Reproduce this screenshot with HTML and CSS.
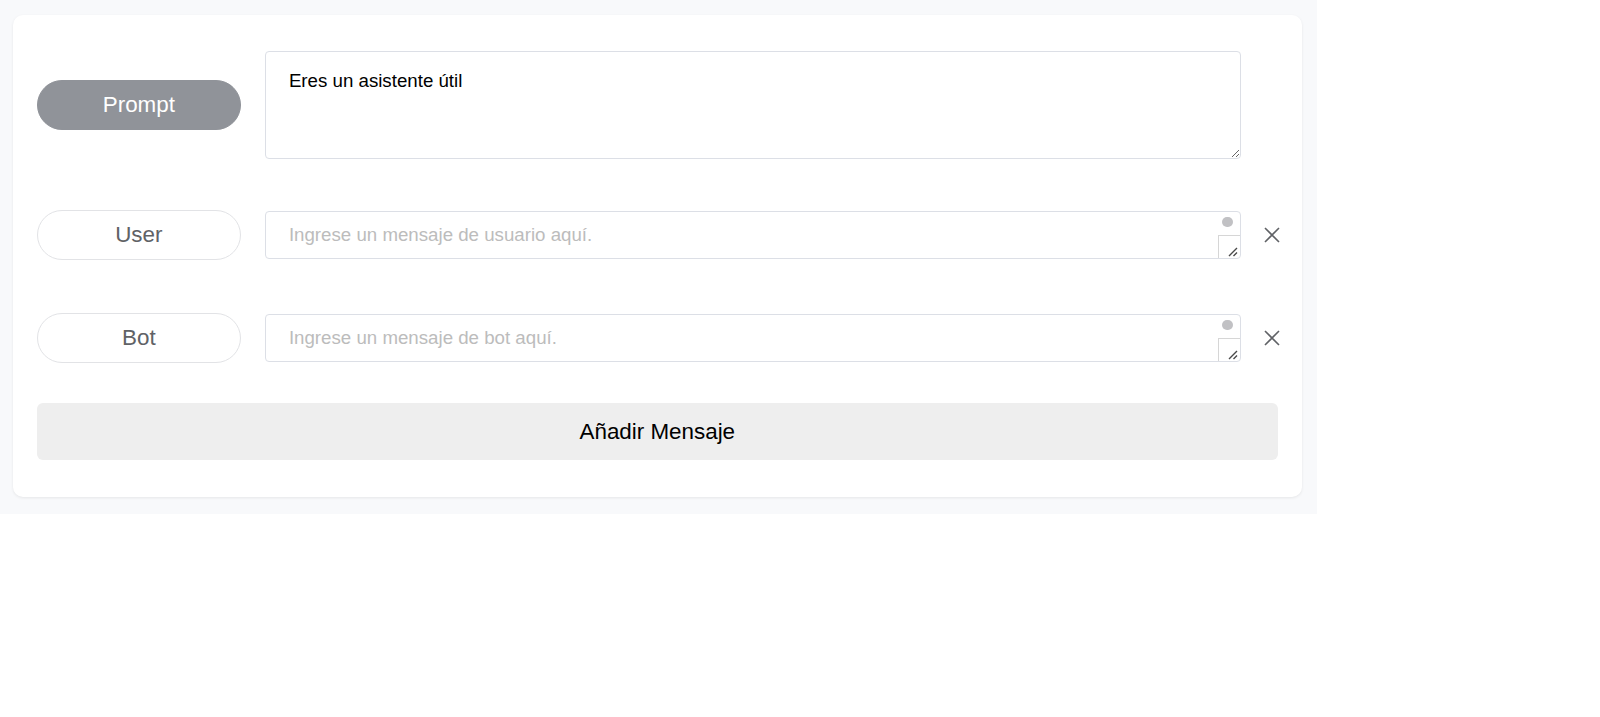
FILE: index.html
```html
<!DOCTYPE html>
<html lang="es">
<head>
    <meta charset="UTF-8">
    <meta name="viewport" content="width=device-width, initial-scale=1.0">
    <title>Mensajes</title>
    <link rel="stylesheet" href="styles.css">
</head>
<body>
    <div class="page">
        <div class="card">
            <div class="row">
                <div class="role role-prompt">Prompt</div>
                <textarea class="prompt-box">Eres un asistente útil</textarea>
                <div class="remove"></div>
            </div>
            <div class="row">
                <div class="role">User</div>
                <div class="msg-box">
                    <textarea class="msg-input" rows="1" placeholder="Ingrese un mensaje de usuario aquí."></textarea>
                    <div class="gutter">
                        <span class="thumb"></span>
                        <span class="corner">
                            <svg width="11" height="11" viewBox="0 0 11 11"><path d="M10 2 L2 10 M10 6.5 L6.5 10" stroke="#4a4a4a" stroke-width="1.4" fill="none"/></svg>
                        </span>
                    </div>
                </div>
                <div class="remove">
                    <svg width="16" height="16" viewBox="0 0 16 16"><path d="M1 1 L15 15 M15 1 L1 15" stroke="#606266" stroke-width="1.6" fill="none"/></svg>
                </div>
            </div>
            <div class="row">
                <div class="role">Bot</div>
                <div class="msg-box">
                    <textarea class="msg-input" rows="1" placeholder="Ingrese un mensaje de bot aquí."></textarea>
                    <div class="gutter">
                        <span class="thumb"></span>
                        <span class="corner">
                            <svg width="11" height="11" viewBox="0 0 11 11"><path d="M10 2 L2 10 M10 6.5 L6.5 10" stroke="#4a4a4a" stroke-width="1.4" fill="none"/></svg>
                        </span>
                    </div>
                </div>
                <div class="remove">
                    <svg width="16" height="16" viewBox="0 0 16 16"><path d="M1 1 L15 15 M15 1 L1 15" stroke="#606266" stroke-width="1.6" fill="none"/></svg>
                </div>
            </div>
            <button class="add-btn">Añadir Mensaje</button>
        </div>
    </div>
</body>
</html>
```

FILE: styles.css
```css
body {
    margin: 0;
    font-family: "Liberation Sans", Arial, sans-serif;
    background: #fff;
}
.page {
    width: 1316.6px;
    box-sizing: border-box;
    padding: 15.3px 14.3px 17.4px 13.3px;
    background: #f8f9fb;
}
.card {
    background: #fff;
    border-radius: 10px;
    box-shadow: 0 1px 3px rgba(0, 0, 0, 0.08);
    padding: 35.7px 24.5px 36.7px 23.5px;
}
.row {
    display: flex;
    align-items: center;
    margin-bottom: 51px;
}
.row:nth-child(2) {
    margin-bottom: 53px;
}
.row:nth-child(3) {
    margin-bottom: 39.8px;
}
.role {
    width: 204.1px;
    height: 50px;
    box-sizing: border-box;
    flex-shrink: 0;
    border: 1px solid #e2e3e6;
    border-radius: 26px;
    display: flex;
    align-items: center;
    justify-content: center;
    font-size: 22.4px;
    color: #606266;
    background: #fff;
}
.role-prompt {
    background: #909399;
    border-color: #909399;
    color: #fff;
}
.prompt-box {
    margin-left: 24.5px;
    width: 975.7px;
    height: 108.2px;
    box-sizing: border-box;
    border: 1px solid #dcdfe6;
    border-radius: 4px;
    padding: 18px 22.5px;
    font-family: inherit;
    font-size: 18.7px;
    line-height: 22px;
    color: #000;
    resize: vertical;
    outline: none;
}
.msg-box {
    margin-left: 24.5px;
    width: 975.7px;
    height: 48px;
    box-sizing: border-box;
    border: 1px solid #dcdfe6;
    border-radius: 4px;
    display: flex;
}
.msg-input {
    flex: 1;
    border: none;
    outline: none;
    resize: none;
    padding: 12px 22.5px;
    font-family: inherit;
    font-size: 18.7px;
    line-height: 22px;
    background: transparent;
}
.msg-input::placeholder {
    color: #bcbcbc;
}
.gutter {
    width: 23.5px;
    display: flex;
    flex-direction: column;
    align-items: flex-end;
}
.thumb {
    width: 11px;
    height: 10px;
    border-radius: 5px;
    background: #c1c1c4;
    margin: 5px 7px 0 0;
}
.corner {
    margin-top: auto;
    width: 22.5px;
    height: 23.5px;
    box-sizing: border-box;
    border-left: 1px solid #d6d6d6;
    border-top: 1px solid #d6d6d6;
    display: flex;
    align-items: flex-end;
    justify-content: flex-end;
    padding: 0 2px 1px 0;
}
.corner svg {
    display: block;
}
.remove {
    width: 36.7px;
    display: flex;
    justify-content: flex-end;
}
.remove svg {
    display: block;
    margin-right: -2px;
}
.add-btn {
    display: block;
    width: 100%;
    height: 57.2px;
    border: none;
    border-radius: 6px;
    background: #eeeeee;
    font-family: inherit;
    font-size: 22.4px;
    color: #000;
}
```
